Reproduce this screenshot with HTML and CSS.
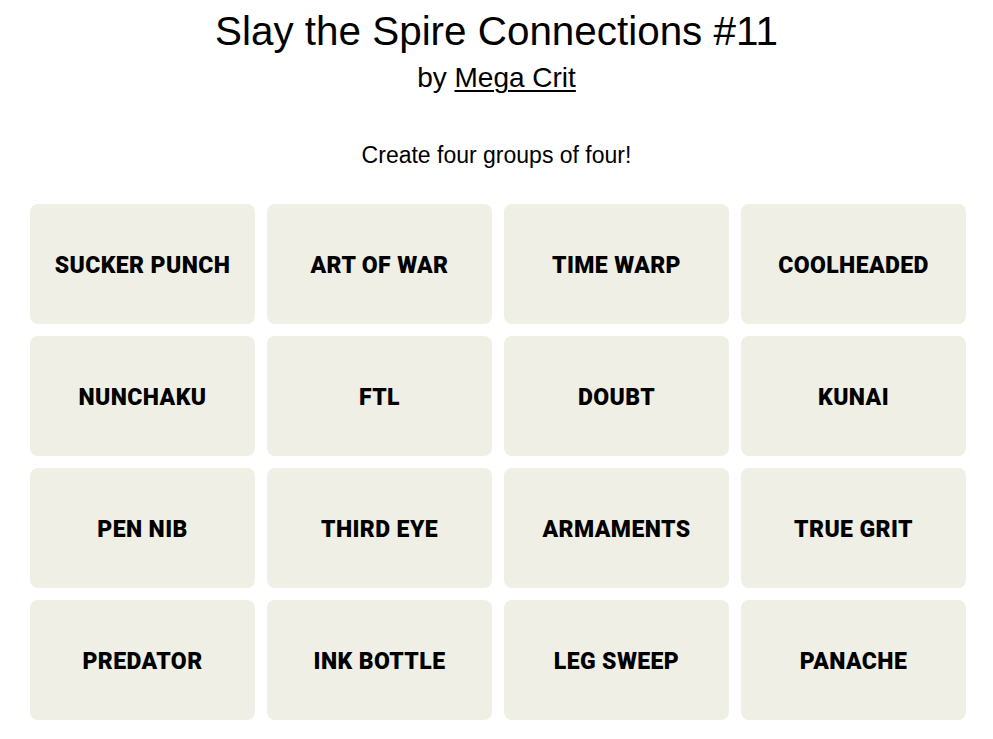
FILE: index.html
```html
<!DOCTYPE html>
<html lang="en">
<head>
<meta charset="utf-8">
<title>Slay the Spire Connections #11</title>
<link rel="stylesheet" href="styles.css">
</head>
<body>
<header class="header">
  <h1 class="title">Slay the Spire Connections #11</h1>
  <p class="byline">by <a class="author" href="#">Mega Crit</a></p>
</header>
<p class="prompt">Create four groups of four!</p>
<div class="board">
  <div class="tile">SUCKER PUNCH</div>
  <div class="tile">ART OF WAR</div>
  <div class="tile">TIME WARP</div>
  <div class="tile">COOLHEADED</div>
  <div class="tile">NUNCHAKU</div>
  <div class="tile">FTL</div>
  <div class="tile">DOUBT</div>
  <div class="tile">KUNAI</div>
  <div class="tile">PEN NIB</div>
  <div class="tile">THIRD EYE</div>
  <div class="tile">ARMAMENTS</div>
  <div class="tile">TRUE GRIT</div>
  <div class="tile">PREDATOR</div>
  <div class="tile">INK BOTTLE</div>
  <div class="tile">LEG SWEEP</div>
  <div class="tile">PANACHE</div>
</div>
</body>
</html>
```
FILE: styles.css
```css
html, body {
  margin: 0;
  padding: 0;
  background: #ffffff;
  color: #000000;
  font-family: "Liberation Sans", Arial, sans-serif;
}

.header {
  display: flex;
  flex-direction: column;
  align-items: center;
  padding-top: 8px;
}

.title {
  margin: 0;
  font-size: 40.4px;
  line-height: 46px;
  font-weight: 400;
}

.byline {
  margin: 8px 0 0;
  font-size: 28px;
  line-height: 31px;
}

.author {
  color: #000000;
  text-decoration: underline;
  text-decoration-thickness: 2px;
  text-underline-offset: 3px;
}

.prompt {
  margin: 49px 0 0;
  text-align: center;
  font-size: 23px;
  line-height: 26px;
}

.board {
  display: grid;
  grid-template-columns: repeat(4, 225px);
  grid-auto-rows: 120px;
  gap: 12px;
  margin: 36px 0 0 30px;
}

.tile {
  display: flex;
  align-items: center;
  justify-content: center;
  padding-top: 3px;
  background: #efefe6;
  border-radius: 8px;
  font-family: Roboto, "Liberation Sans", sans-serif;
  font-size: 23px;
  letter-spacing: 0.4px;
  font-weight: 900;
  text-transform: uppercase;
}
```
